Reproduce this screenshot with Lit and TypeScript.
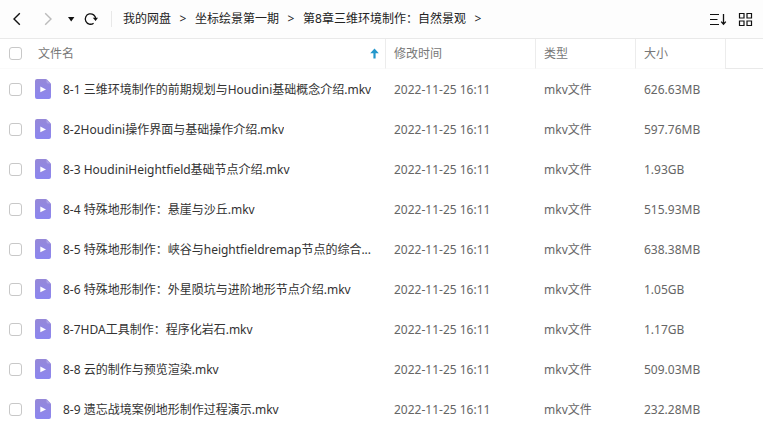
import { LitElement, html, css, svg } from "lit";
import { customElement, property } from "lit/decorators.js";

interface FileEntry {
  name: string;
  modified: string;
  type: string;
  size: string;
}

const file = (name: string, size: string): FileEntry => ({
  name,
  modified: "2022-11-25 16:11",
  type: "mkv文件",
  size,
});

const FILES: FileEntry[] = [
  file("8-1 三维环境制作的前期规划与Houdini基础概念介绍.mkv", "626.63MB"),
  file("8-2Houdini操作界面与基础操作介绍.mkv", "597.76MB"),
  file("8-3 HoudiniHeightfield基础节点介绍.mkv", "1.93GB"),
  file("8-4 特殊地形制作：悬崖与沙丘.mkv", "515.93MB"),
  file("8-5 特殊地形制作：峡谷与heightfieldremap节点的综合...", "638.38MB"),
  file("8-6 特殊地形制作：外星陨坑与进阶地形节点介绍.mkv", "1.05GB"),
  file("8-7HDA工具制作：程序化岩石.mkv", "1.17GB"),
  file("8-8 云的制作与预览渲染.mkv", "509.03MB"),
  file("8-9 遗忘战境案例地形制作过程演示.mkv", "232.28MB"),
];

const PATH = ["我的网盘", "坐标绘景第一期", "第8章三维环境制作：自然景观"];

const stroke = (d: string, width = 1.4) =>
  svg`<path d=${d} fill="none" stroke="currentColor" stroke-width=${width}></path>`;

@customElement("nav-toolbar")
export class NavToolbar extends LitElement {
  @property({ attribute: false }) path: string[] = [];

  static styles = css`
    :host {
      display: flex;
      align-items: center;
      height: 38px;
      border-bottom: 1px solid #e9e9e9;
      background: #fdfdfd;
      color: #222;
    }
    button {
      display: flex;
      padding: 0;
      border: 0;
      background: none;
      color: #111;
    }
    svg {
      display: block;
    }
    .history {
      display: flex;
      align-items: center;
      padding: 0 12px 0 9px;
      border-right: 1px solid #e8e8e8;
    }
    .forward {
      margin-left: 15px;
      color: #bbb;
    }
    .recent {
      margin-left: 11px;
    }
    .reload {
      margin-left: 8px;
    }
    .crumbs {
      display: flex;
      flex: 1;
      align-items: center;
      min-width: 0;
      padding-left: 11px;
      white-space: nowrap;
    }
    a {
      color: inherit;
      text-decoration: none;
    }
    .sep {
      width: 24px;
      text-align: center;
    }
    .views {
      display: flex;
      gap: 10px;
      padding-right: 10px;
    }
  `;

  render() {
    return html`
      <div class="history">
        <button aria-label="后退">
          <svg width="16" height="16">${stroke("M10.8 2.2 5 8l5.8 5.8")}</svg>
        </button>
        <button class="forward" aria-label="前进">
          <svg width="16" height="16">${stroke("M5.2 2.2 11 8l-5.800 5.800")}</svg>
        </button>
        <button class="recent" aria-label="历史记录">
          <svg width="8" height="16"><path d="M1 6h6.400L4.200 10.400z" fill="currentColor"></path></svg>
        </button>
        <button class="reload" aria-label="刷新">
          <svg width="16" height="16">
            ${stroke("M10.6 12.2A5.200 5.200 0 1 1 12.700 7.800", 1.3)}
            <path d="M9.800 6.800h5.200L12.600 10z" fill="currentColor"></path>
          </svg>
        </button>
      </div>
      <nav class="crumbs" aria-label="路径">
        ${this.path.map((p) => html`<a href="#">${p}</a><span class="sep">&gt;</span>`)}
      </nav>
      <div class="views">
        <button aria-label="排序">
          <svg width="18" height="16">
            ${stroke("M0 3.5h9M0 8.5h7.500M0 13.5h9", 1)}
            ${stroke("M13.500 3v10M11.200 10.600l2.300 2.600 2.300-2.600", 1.3)}
          </svg>
        </button>
        <button aria-label="网格视图">
          <svg width="15" height="16">
            ${stroke("M1.5 2.5h4.500v4.500H1.500zM9 2.500h4.500v4.500H9zM1.500 10h4.500v4.500H1.500zM9 10h4.500v4.500H9z", 1.2)}
          </svg>
        </button>
      </div>
    `;
  }
}

@customElement("file-table")
export class FileTable extends LitElement {
  @property({ attribute: false }) files: FileEntry[] = [];

  static styles = css`
    :host {
      display: block;
    }
    table {
      width: 100%;
      table-layout: fixed;
      border-collapse: separate;
      border-spacing: 0;
    }
    .col-check {
      width: 35px;
    }
    .col-date {
      width: 150px;
    }
    .col-type {
      width: 100px;
    }
    .col-size {
      width: 90px;
    }
    .col-rest {
      width: 38px;
    }
    th,
    td {
      box-sizing: border-box;
      padding: 0 0 0 9px;
      text-align: left;
      vertical-align: middle;
      font-weight: 400;
      white-space: nowrap;
      color: #666;
    }
    th {
      height: 30px;
      color: #777;
      border-bottom: 1px solid #fafafa;
    }
    td {
      height: 40px;
      line-height: 20px;
    }
    .divided {
      border-left: 1px solid #ececec;
      padding-left: 8px;
    }
    .rest {
      padding: 0;
      border-left: 1px solid #ececec;
      border-bottom-color: #e9e9e9;
    }
    .head {
      display: flex;
      align-items: center;
      justify-content: space-between;
      padding: 0 6px 0 3px;
    }
    th.name,
    td.name {
      padding-left: 0;
    }
    .entry {
      display: flex;
      align-items: center;
      gap: 12px;
      padding-right: 8px;
    }
    .title {
      min-width: 0;
      overflow: hidden;
      text-overflow: ellipsis;
      color: #333;
    }
    .title,
    .value {
      padding-top: 2px;
    }
    svg {
      display: block;
      flex: none;
    }
    input {
      display: block;
      box-sizing: border-box;
      width: 13px;
      height: 13px;
      margin: 0;
      appearance: none;
      border: 1px solid #c8c8c8;
      border-radius: 3px;
      background: #fff;
    }
  `;

  private row(f: FileEntry) {
    return html`
      <tr>
        <td><input type="checkbox" aria-label=${f.name} /></td>
        <td class="name">
          <div class="entry">
            <svg width="16" height="20">
              <defs>
                <linearGradient id="tint" x1="0" y1="0" x2="0" y2="1">
                  <stop offset="0" stop-color="#9588d8"></stop>
                  <stop offset="1" stop-color="#8c86f0"></stop>
                </linearGradient>
              </defs>
              <path
                d="M2 0h8.500a2 2 0 0 1 1.400.600l3.500 3.500a2 2 0 0 1 .600 1.400V18a2 2 0 0 1-2 2H2a2 2 0 0 1-2-2V2a2 2 0 0 1 2-2z"
                fill="url(#tint)"
              ></path>
              <path d="M11.500.300 15.700 4.500H13a1.500 1.500 0 0 1-1.500-1.500z" fill="#a99fe6"></path>
              <path d="M5.300 7.600v5.600L11 10.400z" fill="#fff"></path>
            </svg>
            <span class="title">${f.name}</span>
          </div>
        </td>
        <td class="value">${f.modified}</td>
        <td class="value">${f.type}</td>
        <td class="value">${f.size}</td>
        <td></td>
      </tr>
    `;
  }

  render() {
    return html`
      <table>
        <colgroup>
          <col class="col-check" />
          <col />
          <col class="col-date" />
          <col class="col-type" />
          <col class="col-size" />
          <col class="col-rest" />
        </colgroup>
        <thead>
          <tr>
            <th><input type="checkbox" aria-label="全选" /></th>
            <th class="name" aria-sort="ascending">
              <div class="head">
                文件名
                <svg width="9" height="12">
                  <path d="M4.500.500 8.800 5.200H5.600V10.500H3.400V5.200H.200z" fill="#2497cb"></path>
                </svg>
              </div>
            </th>
            <th class="divided">修改时间</th>
            <th class="divided">类型</th>
            <th class="divided">大小</th>
            <th class="rest"></th>
          </tr>
        </thead>
        <tbody>
          ${this.files.map((f) => this.row(f))}
        </tbody>
      </table>
    `;
  }
}

@customElement("app-root")
export class AppRoot extends LitElement {
  static styles = css`
    :host {
      display: block;
      background: #fff;
      font: 12px/18px "Noto Sans", "Noto Sans CJK SC", sans-serif;
    }
  `;

  render() {
    return html`
      <nav-toolbar .path=${PATH}></nav-toolbar>
      <file-table .files=${FILES}></file-table>
    `;
  }
}
